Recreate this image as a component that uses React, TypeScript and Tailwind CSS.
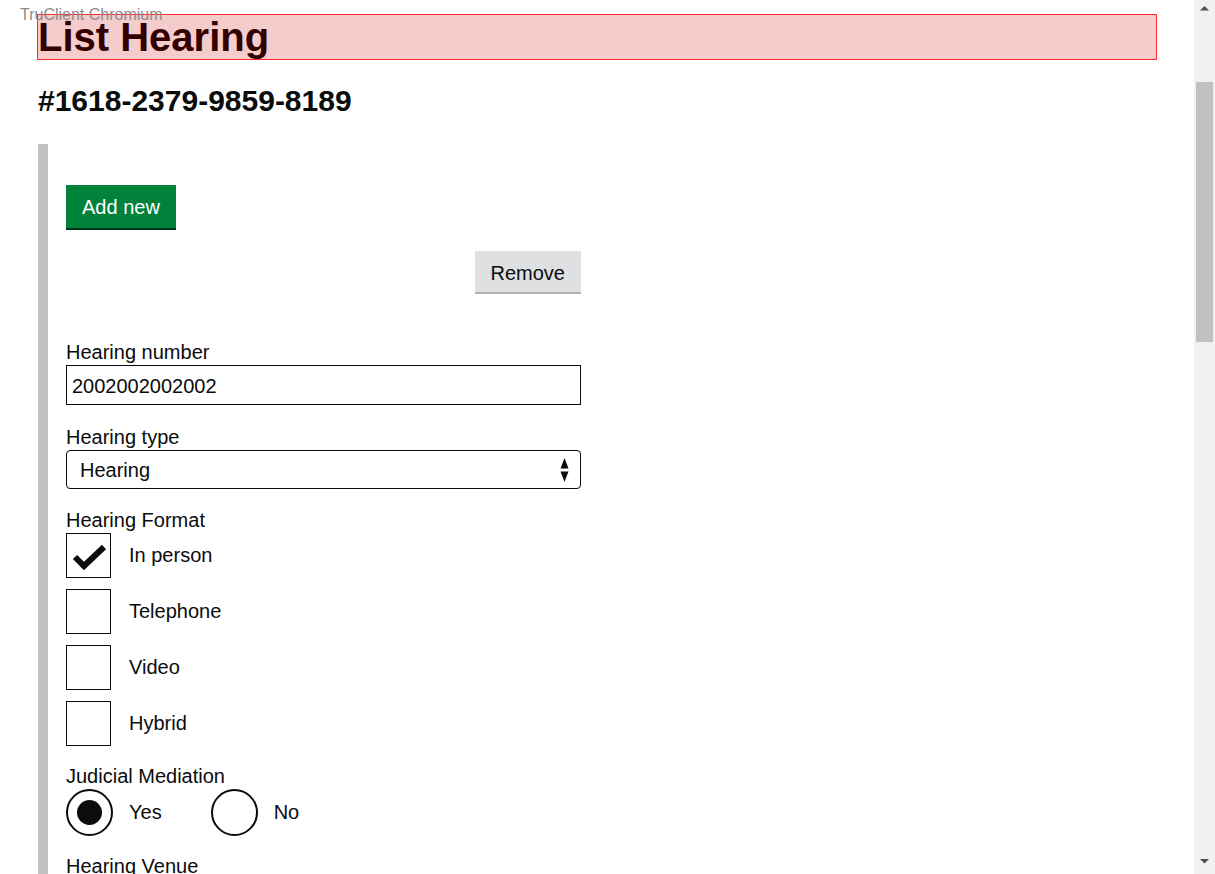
const FORMATS = [
  { label: 'In person', checked: true },
  { label: 'Telephone', checked: false },
  { label: 'Video', checked: false },
  { label: 'Hybrid', checked: false },
];

function Checkbox({ label, checked }: { label: string; checked: boolean }) {
  return (
    <div className="flex items-center h-[45px]">
      <div className="w-[45px] h-[45px] border border-[#0b0c0c] bg-white shrink-0">
        {checked && (
          <svg width="43" height="43" viewBox="0 0 43 43">
            <polyline
              points="8,23 17,32 37,13"
              fill="none"
              stroke="#0b0c0c"
              strokeWidth="6"
            />
          </svg>
        )}
      </div>
      <span className="ml-[18px]">{label}</span>
    </div>
  );
}

function Radio({ label, checked }: { label: string; checked: boolean }) {
  return (
    <div className="flex items-center h-[47px]">
      <div className="w-[47px] h-[47px] rounded-full border-2 border-[#0b0c0c] flex items-center justify-center shrink-0">
        {checked && <div className="w-[25px] h-[25px] rounded-full bg-[#0b0c0c]" />}
      </div>
      <span className="ml-[16px]">{label}</span>
    </div>
  );
}

export default function App() {
  return (
    <div
      className="relative flex h-screen overflow-hidden bg-white text-[#0b0c0c]"
      style={{ fontFamily: '"Liberation Sans", Arial, sans-serif' }}
    >
      <div className="absolute left-[20px] top-[7px] text-[16px] leading-[16px] text-[#8c8c8c] z-10">
        TruClient Chromium
      </div>

      {/* Page */}
      <main className="flex-1 min-w-0 pl-[38px] pr-[37px] pt-[14px]">
        <h1 className="-ml-px border border-[#ff2a2a] bg-[#f5cccc] text-[#330000] text-[40px] leading-[44px] font-bold">
          List Hearing
        </h1>
        <h2 className="mt-[23px] text-[30px] leading-[36px] font-bold">
          #1618-2379-9859-8189
        </h2>

        <div className="mt-[25px] border-l-[10px] border-[#bfc1c3] pl-[18px] pt-[41px] text-[20px] leading-[25px] h-[800px]">
          <div className="w-[515px] flex flex-col">
            <button className="self-start h-[43px] px-[16px] pt-[2px] bg-[#00823b] text-white shadow-[0_2px_0_#003618] leading-[41px]">
              Add new
            </button>
            <button className="self-end mt-[23px] h-[41px] px-[16px] pt-[3px] bg-[#dee0e2] shadow-[0_2px_0_#b1b4b6] leading-[38px]">
              Remove
            </button>

            <label className="mt-[48px] block">Hearing number</label>
            <div className="h-[40px] border border-[#0b0c0c] flex items-center px-[5px] pt-[2px]">
              2002002002002
            </div>

            <label className="mt-[20px] block">Hearing type</label>
            <div className="h-[39px] border border-[#0b0c0c] rounded-[4px] flex items-center justify-between pl-[13px] pr-[11px] pt-[1px]">
              <span>Hearing</span>
              <svg width="9" height="24" viewBox="0 0 9 24">
                <polygon points="4.5,0 8.5,10.5 0.5,10.5" fill="#0b0c0c" />
                <polygon points="0.5,13.5 8.5,13.5 4.5,24" fill="#0b0c0c" />
              </svg>
            </div>

            <label className="mt-[19px] block">Hearing Format</label>
            <div className="flex flex-col gap-[11px]">
              {FORMATS.map(f => (
                <Checkbox key={f.label} label={f.label} checked={f.checked} />
              ))}
            </div>

            <label className="mt-[18px] block">Judicial Mediation</label>
            <div className="flex gap-[49px]">
              <Radio label="Yes" checked />
              <Radio label="No" checked={false} />
            </div>

            <label className="mt-[18px] block">Hearing Venue</label>
          </div>
        </div>
      </main>

      {/* Scrollbar */}
      <div className="w-[21px] shrink-0 bg-[#f1f1f1] flex flex-col items-center">
        <svg width="9" height="17" viewBox="0 0 9 17" className="mt-[1px]">
          <polygon points="4.5,5 9,9.5 0,9.5" fill="#505050" />
        </svg>
        <div className="mt-[64px] w-[17px] h-[260px] bg-[#c1c1c1]" />
        <div className="flex-1" />
        <svg width="9" height="17" viewBox="0 0 9 17" className="mb-[4px]">
          <polygon points="0,6 9,6 4.5,10.5" fill="#505050" />
        </svg>
      </div>
    </div>
  );
}
